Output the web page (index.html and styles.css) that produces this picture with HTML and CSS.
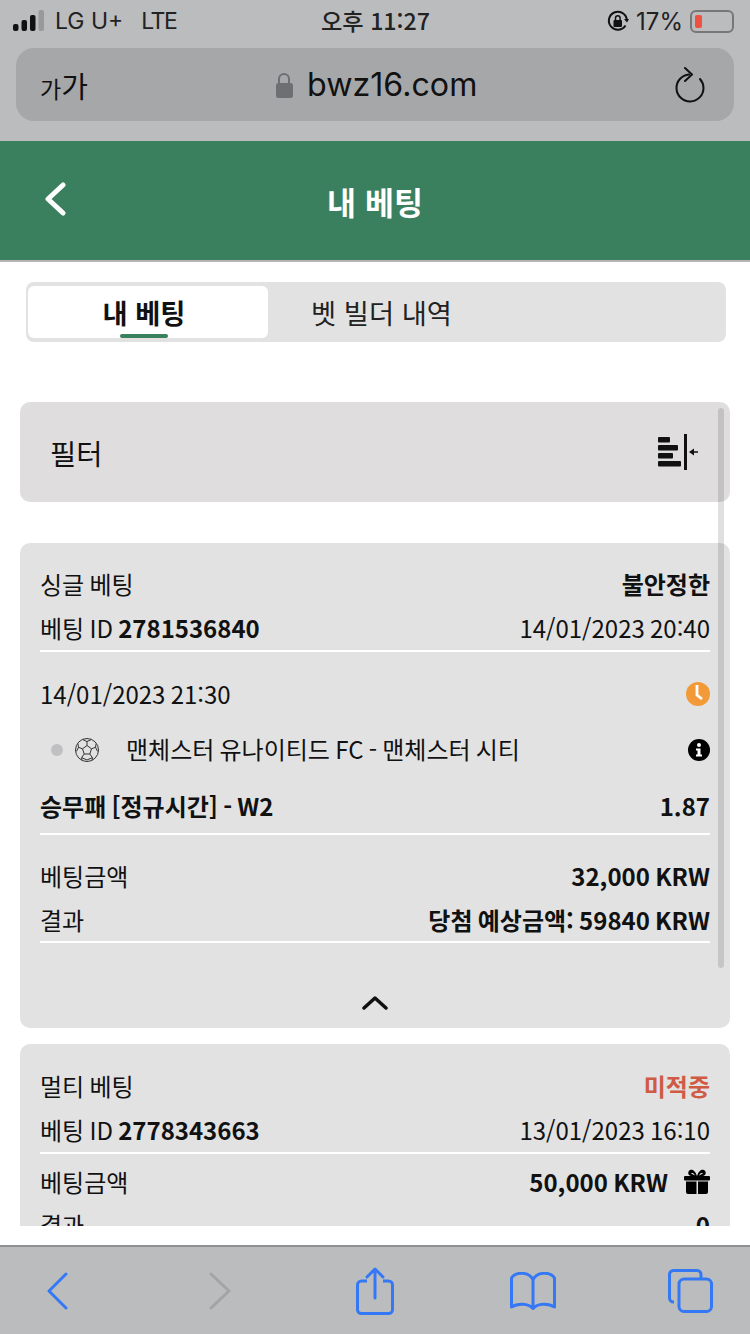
FILE: index.html
```html
<!DOCTYPE html>
<html lang="ko">
<head>
  <meta charset="UTF-8" />
  <meta name="viewport" content="width=device-width, initial-scale=1.0"/>
  <title>내 베팅</title>
  <link rel="stylesheet" href="styles.css">
</head>
<body>
  <div class="browserTop">
    <div class="statusBar">
      <div class="statusLeft">
        <svg class="signal" width="32" height="22" viewBox="0 0 32 22">
          <rect x="0" y="14" width="5.500" height="7" rx="2" fill="#111"/>
          <rect x="8.500" y="10" width="5.500" height="11" rx="2" fill="#111"/>
          <rect x="17" y="5" width="5.500" height="16" rx="2" fill="#111"/>
          <rect x="25.500" y="0" width="5.500" height="21" rx="2" fill="#999"/>
        </svg>
        <span>LG U+</span>
        <span class="lte">LTE</span>
      </div>
      <div class="statusTime">오후 11:27</div>
      <div class="statusRight">
        <svg width="22" height="24" viewBox="0 0 22 24">
          <path d="M18.500 16.500A9 9 0 1 1 19.800 10.500" fill="none" stroke="#111" stroke-width="2"/>
          <path d="M17 10l3 3.500 2-3.500z" fill="#111"/>
          <rect x="6.500" y="11" width="8.500" height="7" rx="1" fill="#111"/>
          <path d="M8.500 11.500V9a2.300 2.300 0 0 1 4.600 0v2.500" fill="none" stroke="#111" stroke-width="1.500"/>
        </svg>
        <span class="batteryText">17%</span>
        <div class="battery"><div class="batteryLevel"></div></div>
      </div>
    </div>
    <div class="urlBar">
      <span class="textSize"><span class="textSizeSmall">가</span>가</span>
      <div class="urlMiddle">
        <svg width="18" height="28" viewBox="0 0 18 28">
          <path d="M4 13V8a5 5 0 0 1 10 0v5" fill="none" stroke="#6e6f72" stroke-width="2"/>
          <rect x="1" y="12" width="17" height="15" rx="2.500" fill="#6e6f72"/>
        </svg>
        <span>bwz16.com</span>
      </div>
      <svg class="reload" width="32" height="36" viewBox="0 0 32 36">
        <path d="M15 7.500A13.500 13.500 0 1 0 29.500 21c0-3.500-1.300-6.500-3.500-9" fill="none" stroke="#111" stroke-width="2" stroke-linecap="round"/>
        <path d="M11 1l7 6.500-7 6.500" fill="none" stroke="#111" stroke-width="2" stroke-linecap="round" stroke-linejoin="round"/>
      </svg>
    </div>
  </div>

  <header class="appHeader">
    <svg class="backIcon" width="24" height="34" viewBox="0 0 24 34">
      <path d="M20 3L5 17l15 14" fill="none" stroke="#fff" stroke-width="5" stroke-linecap="round" stroke-linejoin="round"/>
    </svg>
    <h1>내 베팅</h1>
  </header>

  <main class="content">
    <div class="tabs">
      <div class="tab tabActive"><span>내 베팅</span></div>
      <div class="tab"><span>벳 빌더 내역</span></div>
    </div>

    <div class="filter">
      <span>필터</span>
      <svg width="42" height="36" viewBox="0 0 42 36">
        <rect x="0" y="3" width="12" height="5.500" rx="1" fill="#111"/>
        <rect x="0" y="11" width="20" height="5.500" rx="1" fill="#111"/>
        <rect x="0" y="19" width="15" height="5.500" rx="1" fill="#111"/>
        <rect x="0" y="27" width="23" height="5.500" rx="1" fill="#111"/>
        <rect x="26" y="0" width="3" height="36" fill="#111"/>
        <path d="M40 18h-7" stroke="#111" stroke-width="1.500"/>
        <path d="M31 18l5-3.500v7z" fill="#111"/>
      </svg>
    </div>

    <section class="card">
      <div class="row">
        <span>싱글 베팅</span>
        <b>불안정한</b>
      </div>
      <div class="row rowLine">
        <span>베팅 ID <b>2781536840</b></span>
        <span>14/01/2023 20:40</span>
      </div>
      <div class="row rowDate">
        <span>14/01/2023 21:30</span>
        <svg width="24" height="24" viewBox="0 0 24 24">
          <circle cx="12" cy="12" r="12" fill="#f29a38"/>
          <path d="M11 3v10l5 4" fill="none" stroke="#fff" stroke-width="2.800"/>
        </svg>
      </div>
      <div class="row rowMatch">
        <div class="matchName">
          <i class="dot"></i>
          <svg width="26" height="26" viewBox="0 0 26 26">
            <g fill="none" stroke="#333" stroke-width="1">
              <circle cx="13" cy="13" r="11.500"/>
              <path d="M13 8.500l4.500 3.300-1.700 5.200h-5.600l-1.700-5.200z"/>
              <path d="M13 8.500V4.500M17.500 11.800l4-1.500M15.800 17l2.600 3.600M10.200 17l-2.600 3.600M8.500 11.800l-4-1.500"/>
              <path d="M8.500 2.500L13 4.500l4.500-2M21.500 10.300l.6-3.500M21.500 10.300l2 4M18.400 20.600l-.4 3M18.400 20.600l-5.400 2.400-5.400-2.400M7.600 20.600l.4 3M4.500 10.300l-2 4M4.500 10.300l-.6-3.500"/>
            </g>
          </svg>
          <span>맨체스터 유나이티드 FC - 맨체스터 시티</span>
        </div>
        <svg width="22" height="22" viewBox="0 0 22 22">
          <circle cx="11" cy="11" r="11" fill="#000"/>
          <circle cx="11" cy="6" r="2" fill="#fff"/>
          <path d="M8 9.500h4.500v6H14v2H8v-2h1.500v-4H8z" fill="#fff"/>
        </svg>
      </div>
      <div class="row rowLine rowMarket">
        <b>승무패 [정규시간] - W2</b>
        <b>1.87</b>
      </div>
      <div class="row rowAmount">
        <span>베팅금액</span>
        <b>32,000 KRW</b>
      </div>
      <div class="row rowLine rowResult">
        <span>결과</span>
        <b>당첨 예상금액: 59840 KRW</b>
      </div>
      <div class="collapse">
        <svg width="28" height="16" viewBox="0 0 28 16">
          <path d="M3 14L14 4l11 10" fill="none" stroke="#111" stroke-width="3.500" stroke-linecap="round" stroke-linejoin="round"/>
        </svg>
      </div>
    </section>

    <section class="card cardSecond">
      <div class="row">
        <span>멀티 베팅</span>
        <b class="lost">미적중</b>
      </div>
      <div class="row rowLine">
        <span>베팅 ID <b>2778343663</b></span>
        <span>13/01/2023 16:10</span>
      </div>
      <div class="row rowStake">
        <span>베팅금액</span>
        <div class="stakeValue">
          <b>50,000 KRW</b>
          <svg width="26" height="25" viewBox="0 0 26 25">
            <path d="M13 7C11 1 8 0 6 1S3 6 7 7zM13 7c2-6 5-7 7-6s3 5-1 6z" fill="#000"/>
            <path d="M7 4.500c2-1 3 0 4 2zM19 4.500c-2-1-3 0-4 2z" fill="#e2e2e2"/>
            <rect x="0" y="7" width="26" height="4.500" rx="1" fill="#000"/>
            <path d="M2 12.500h10.500V25H4a2 2 0 0 1-2-2zM14 12.500h10V23a2 2 0 0 1-2 2h-8z" fill="#000"/>
          </svg>
        </div>
      </div>
      <div class="row">
        <span>결과</span>
        <b>0</b>
      </div>
    </section>

    <div class="scrollThumb"></div>
  </main>

  <nav class="browserBottom">
    <svg width="26" height="38" viewBox="0 0 26 38">
      <path d="M22 2L5 19l17 17" fill="none" stroke="#3478f6" stroke-width="3" stroke-linecap="round" stroke-linejoin="round"/>
    </svg>
    <svg width="26" height="38" viewBox="0 0 26 38">
      <path d="M4 2l18 17L4 36" fill="none" stroke="#a3a4a6" stroke-width="3" stroke-linecap="round" stroke-linejoin="round"/>
    </svg>
    <svg width="38" height="48" viewBox="0 0 38 48">
      <path d="M11 14H5.500a4 4 0 0 0-4 4v24.500a4 4 0 0 0 4 4h27a4 4 0 0 0 4-4V18a4 4 0 0 0-4-4H27" fill="none" stroke="#3478f6" stroke-width="3"/>
      <path d="M19 31V2M11 10l8-8 8 8" fill="none" stroke="#3478f6" stroke-width="3" stroke-linecap="round" stroke-linejoin="round"/>
    </svg>
    <svg width="46" height="38" viewBox="0 0 46 38">
      <path d="M23 8C20 0 6 -1 1.500 6v29c6-4 17-4 21.500 1.500C27.500 31 38.500 31 44.500 35V6C40 -1 26 0 23 8zV36" fill="none" stroke="#3478f6" stroke-width="3" stroke-linejoin="round"/>
    </svg>
    <svg width="45" height="44" viewBox="0 0 45 44">
      <path d="M6 33H5.500a4 4 0 0 1-4-4V5.500a4 4 0 0 1 4-4H29a4 4 0 0 1 4 4V9" fill="none" stroke="#3478f6" stroke-width="3"/>
      <rect x="11" y="10" width="32.500" height="32.500" rx="5" fill="none" stroke="#3478f6" stroke-width="3"/>
    </svg>
  </nav>
</body>
</html>
```

FILE: styles.css
```css
* {
  box-sizing: border-box;
}

body {
  margin: 0;
  width: 750px;
  height: 1334px;
  overflow: hidden;
  display: flex;
  flex-direction: column;
  background-color: #fff;
  color: #111;
  font-family: "Noto Sans CJK KR", "Noto Sans", sans-serif;
  font-size: 24px;
}

b {
  font-weight: 700;
}

.browserTop {
  height: 141px;
  flex: none;
  padding: 0 16px;
  background-color: #bbbcbe;
}

.statusBar {
  height: 48px;
  display: flex;
  justify-content: space-between;
  align-items: center;
  position: relative;
  padding-bottom: 6px;
  font-family: Inter, "Noto Sans CJK KR", sans-serif;
  font-size: 23px;
  color: #222;
}

.statusLeft {
  display: flex;
  align-items: center;
  gap: 10px;
  margin-left: -3px;
}

.lte {
  margin-left: 8px;
  letter-spacing: -1.500px;
}

.statusTime {
  position: absolute;
  left: 305px;
  top: 3px;
  font-size: 23.200px;
  font-weight: 500;
  font-family: "Noto Sans CJK KR", sans-serif;
}

.statusRight {
  display: flex;
  align-items: center;
  gap: 7px;
}

.batteryText {
  font-size: 24px;
}

.battery {
  width: 44px;
  height: 23px;
  border: 2px solid #777;
  border-radius: 6px;
  padding: 3px;
}

.batteryLevel {
  width: 7px;
  height: 13px;
  border-radius: 2px;
  background-color: #ef5140;
}

.urlBar {
  height: 73px;
  display: flex;
  justify-content: space-between;
  align-items: center;
  position: relative;
  padding: 0 28px 0 24px;
  border-radius: 18px;
  background-color: #a6a7a9;
}

.textSize {
  font-size: 29px;
}

.textSizeSmall {
  font-size: 23px;
}

.urlMiddle {
  position: absolute;
  left: 259px;
  display: flex;
  align-items: center;
  gap: 14px;
  font-family: Inter, sans-serif;
  font-size: 32.200px;
}

.appHeader {
  height: 121px;
  flex: none;
  display: flex;
  justify-content: center;
  align-items: center;
  position: relative;
  background-color: #3b805e;
  border-bottom: 2px solid #b5b5b5;
}

.appHeader h1 {
  margin: 0;
  color: #fff;
  font-size: 31.500px;
  font-weight: 700;
}

.backIcon {
  position: absolute;
  left: 43px;
  top: 41px;
}

.content {
  flex: 1;
  position: relative;
  overflow: hidden;
  padding: 20px 20px 19px;
  display: flex;
  flex-direction: column;
}

.tabs {
  height: 60px;
  flex: none;
  display: flex;
  margin: 0 4px 0 6px;
  padding: 4px 2px;
  border-radius: 8px;
  background-color: #e2e2e2;
}

.tab {
  width: 240px;
  display: flex;
  justify-content: center;
  align-items: center;
  font-size: 27.300px;
  color: #222;
}

.tab span {
  margin-right: 8px;
}

.tab + .tab span {
  margin-right: 13px;
}

.tabActive {
  position: relative;
  border-radius: 6px;
  background-color: #fff;
  font-weight: 700;
  color: #111;
}

.tabActive::after {
  content: "";
  position: absolute;
  left: 92px;
  bottom: 0;
  width: 48px;
  height: 4px;
  border-radius: 2px;
  background-color: #3b805e;
}

.filter {
  height: 100px;
  flex: none;
  margin-top: 60px;
  display: flex;
  justify-content: space-between;
  align-items: center;
  padding: 0 30px;
  border-radius: 10px;
  background-color: #dfdddd;
  font-size: 28.500px;
}

.card {
  flex: none;
  margin-top: 41px;
  padding: 18px 20px 0;
  border-radius: 10px;
  background-color: #e2e2e2;
  word-spacing: -1.500px;
}

.cardSecond {
  margin-top: 16px;
  padding-top: 19px;
  height: 182px;
  border-radius: 10px 10px 0 0;
  overflow: hidden;
}

.row {
  height: 44px;
  display: flex;
  justify-content: space-between;
  align-items: center;
}

.rowLine {
  height: 47px;
  border-bottom: 2px solid #fff;
}

.rowDate {
  height: 64px;
  margin-top: 9px;
}

.rowDate svg {
  margin-top: 2px;
}

.rowMatch {
  height: 46px;
}

.rowMatch svg,
.dot {
  margin-top: 4px;
}

.rowMarket {
  height: 64px;
  padding-top: 6px;
}

.rowAmount {
  margin-top: 18px;
}

.rowResult {
  height: 46px;
}

.rowStake {
  height: 48px;
  padding-top: 6px;
}

.matchName {
  display: flex;
  align-items: center;
  padding-left: 11px;
}

.dot {
  width: 12px;
  height: 12px;
  margin-right: 11px;
  border-radius: 50%;
  background-color: #c0c0c2;
}

.matchName span {
  margin-left: 26px;
}

.stakeValue {
  display: flex;
  align-items: center;
  gap: 16px;
}

.lost {
  color: #cf5b45;
}

.collapse {
  height: 85px;
  display: flex;
  justify-content: center;
  align-items: flex-end;
  padding-bottom: 18px;
}

.scrollThumb {
  position: absolute;
  right: 26px;
  top: 146px;
  width: 6px;
  height: 560px;
  border-radius: 3px;
  background-color: rgba(0, 0, 0, 0.12);
}

.browserBottom {
  height: 89px;
  flex: none;
  display: grid;
  grid-template-columns: 114px 212px 98px 218px 96px;
  justify-items: center;
  align-items: center;
  border-top: 2px solid #8f9092;
  background-color: #bbbcbe;
}
```
